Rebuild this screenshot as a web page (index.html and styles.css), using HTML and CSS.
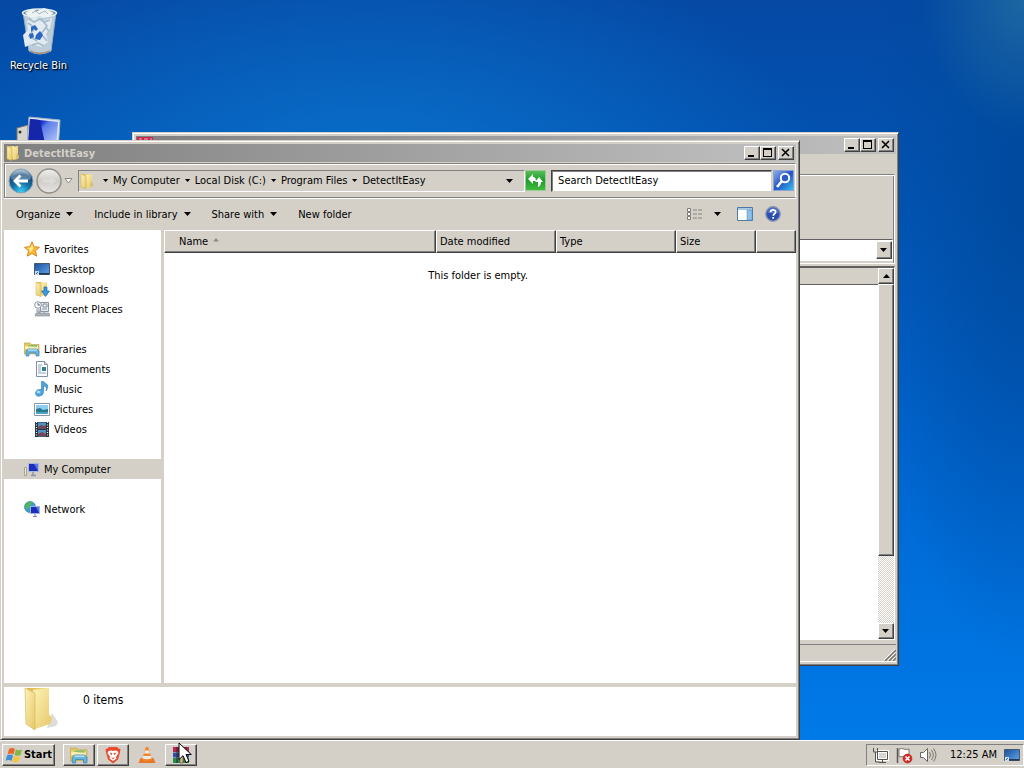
FILE: index.html
```html
<!DOCTYPE html>
<html lang="en">
<head>
<meta charset="utf-8">
<title>DetectItEasy</title>
<link rel="stylesheet" href="styles.css">
</head>
<body>
<svg class="defs" aria-hidden="true">
  <defs>
    <linearGradient id="fold" x1="0" x2="1" y1="0" y2="1"><stop offset="0" stop-color="#fdf3b8"/><stop offset="1" stop-color="#e6c766"/></linearGradient>
    <linearGradient id="foldDark" x1="0" x2="1"><stop offset="0" stop-color="#d9b64c"/><stop offset="1" stop-color="#f3da83"/></linearGradient>
    <linearGradient id="screen" x1="0" x2="1" y1="0" y2="1"><stop offset="0" stop-color="#1430b8"/><stop offset=".3" stop-color="#1c35cc"/><stop offset=".4" stop-color="#5b7be8"/><stop offset="1" stop-color="#c9d8fa"/></linearGradient>
    <linearGradient id="desk" x1="0" x2="1" y1="0" y2="1"><stop offset="0" stop-color="#1b4f9d"/><stop offset="1" stop-color="#5fa6ea"/></linearGradient>
    <radialGradient id="orb" cx=".5" cy=".95" r=".9"><stop offset="0" stop-color="#3fd0f5"/><stop offset=".45" stop-color="#136ea6"/><stop offset=".8" stop-color="#1c4a78"/><stop offset="1" stop-color="#8cb2cc"/></radialGradient>
    <linearGradient id="orbOff" x1="0" x2="0" y1="0" y2="1"><stop offset="0" stop-color="#f0f0ee"/><stop offset=".5" stop-color="#cfcdc9"/><stop offset="1" stop-color="#e8e6e2"/></linearGradient>
    <linearGradient id="green" x1="0" x2="0" y1="0" y2="1"><stop offset="0" stop-color="#58c058"/><stop offset=".5" stop-color="#1f9c2c"/><stop offset="1" stop-color="#43bd3c"/></linearGradient>
    <linearGradient id="blue" x1="0" x2="1" y1="0" y2="1"><stop offset="0" stop-color="#8fb4ec"/><stop offset=".5" stop-color="#2453c4"/><stop offset="1" stop-color="#35c8f4"/></linearGradient>
    <symbol id="i-folder" viewBox="0 0 16 16"><path d="M3 1h6v13H3z" fill="url(#foldDark)"/><path d="M7 2l6-1v13l-5 1z" fill="url(#fold)"/><path d="M2 1l5 2v12.500L2 14z" fill="url(#fold)" stroke="#cfa944" stroke-width=".5"/><path d="M12 8l2 3v2l-3 1z" fill="#d8bd70"/></symbol>
    <symbol id="i-library" viewBox="0 0 16 16"><path d="M0 2h6l1 1.500h8V13H0z" fill="#e6c862" stroke="#b99a42" stroke-width=".6"/><path d="M1 5h13v3H1z" fill="#fbf0b4"/><path d="M1 5h3v-1h9v2" fill="#8cc06c"/><path d="M2 15V10l2-2h9l2 2v5h-3v-3H5v3z" fill="#65b5de" stroke="#3a83b4" stroke-width=".7"/><path d="M4 9h9" stroke="#d5f1fd" stroke-width="1"/></symbol>
    <symbol id="i-desktop" viewBox="0 0 16 16"><path d="M.5 2.500h15v11H.5z" fill="url(#desk)" stroke="#46586e"/><path d="M1 12h14v1.500H1z" fill="#26384e"/><path d="M1 10h4v4H1z" fill="#c9dcf0"/><path d="M2 13l2-2" stroke="#2868b0"/></symbol>
    <symbol id="i-arrow" viewBox="0 0 8 4"><path d="M0 0h7L3.500 4z"/></symbol>
    <symbol id="i-min" viewBox="0 0 12 10"><path d="M2 7h6v2H2z"/></symbol>
    <symbol id="i-max" viewBox="0 0 12 10"><path d="M1 0h9v9H1zM2 2v6h7V2z" fill-rule="evenodd"/></symbol>
    <symbol id="i-close" viewBox="0 0 12 10"><path d="M2 1l7 7M9 1L2 8" stroke="#000" stroke-width="1.600"/></symbol>
  </defs>
</svg>

<main class="desktop">
  <a class="shortcut" href="#recycle">
    <svg class="shortcut-icon" viewBox="5 0 48 48"><path d="M13 5h33l-5 39q-10 6-22 0z" fill="#b0c4d4"/><path d="M13 5l6 39q10 6 22 0l5-39q-15 7-33 0z" fill="#bccdd9" stroke="#91aec7"/><ellipse cx="29.500" cy="6" rx="17" ry="4" fill="#6f8896" stroke="#e5f1f6" stroke-width="1.500"/><path d="M15 6l6-4 6 2 7-3 10 5-6 4-9-1-8 2z" fill="#edf3f5"/><path d="M22 6l4-2 3 3 6-3 3 3" stroke="#a3b4be" fill="none"/><path d="M17 14l8-4 7 4 10-3-2 10-4 6 2 8-7 5-9-3-7 3-2-12 5-5z" fill="#e2ebf1"/><path d="M18 16l7 5-6 8 8 5m4-22l6 7-6 8 6 7M19 12l5 3 6-3 4 3 6-2M35 20l4 4M22 38l6-2 6 3" stroke="#a5bac9" stroke-width="1.600" fill="none"/><path d="M21 20l4-2 3 4-2 2-2-2-3 3zM19 27l4-1 1 4-4 2zM26 28l4-4 3 4-3 5-5-1z" fill="#2c66bf"/><path d="M20 43q9 5 20 0l-1 2q-9 4-18 0z" fill="#a88f78"/></svg>
    <span>Recycle Bin</span>
  </a>
  <a class="shortcut" href="#computer">
    <svg class="shortcut-icon" viewBox="6 0 48 48"><path d="M8 12l11-3v34l-11-3z" fill="#d8d6cc" stroke="#76766e"/><circle cx="11" cy="16" r="1.500" fill="#333"/><path d="M20 1l31 3-2 31-31-2z" fill="#dce5f2" stroke="#a6b4c8"/><path d="M21 3l28 3-2 26-28-2z" fill="#d0d8f5"/><path d="M21 3l28 3-2 26-28-2z" fill="url(#screen)"/><path d="M21 3l10 1 6 28-18-2z" fill="#1526a8"/></svg>
    <span>My Computer</span>
  </a>

  <section class="window window-back" aria-label="Archive window">
    <header class="titlebar">
      <svg class="i16" viewBox="0 0 16 16"><path d="M0 0h16v5H0z" fill="#c3294e"/><path d="M2 2h3m2 0h4m2 0h2" stroke="#eeb0bc"/><path d="M0 5h16v5H0z" fill="#3757b5"/><path d="M0 10h16v5H0z" fill="#389048"/></svg>
      <h2></h2>
      <div class="caption"><button class="btn" aria-label="Minimize"><svg><use href="#i-min"/></svg></button><button class="btn" aria-label="Maximize"><svg><use href="#i-max"/></svg></button><button class="btn close" aria-label="Close"><svg><use href="#i-close"/></svg></button></div>
    </header>
    <div class="back-menu"></div>
    <div class="back-tools"><div class="combo"><button class="btn" aria-label="Open list"><svg class="tri"><use href="#i-arrow"/></svg></button></div></div>
    <div class="back-list">
      <div class="back-pane"><div class="back-head"></div></div>
      <div class="scroll"><button class="btn" aria-label="Scroll up"><svg class="tri up"><use href="#i-arrow"/></svg></button><div class="thumb btn"></div><div class="track"></div><button class="btn" aria-label="Scroll down"><svg class="tri"><use href="#i-arrow"/></svg></button></div>
    </div>
    <footer class="back-status"><svg class="grip" viewBox="0 0 12 12"><path d="M1 12L12 1M5 12l7-7M9 12l3-3" stroke="#77756f" stroke-width="1.500"/><path d="M0 11L11 0M4 11l7-7M8 11l3-3" stroke="#fff"/></svg></footer>
  </section>

  <section class="window window-explorer" aria-label="DetectItEasy">
    <header class="titlebar">
      <svg class="i16"><use href="#i-folder"/></svg>
      <h1>DetectItEasy</h1>
      <div class="caption"><button class="btn" aria-label="Minimize"><svg><use href="#i-min"/></svg></button><button class="btn" aria-label="Maximize"><svg><use href="#i-max"/></svg></button><button class="btn close" aria-label="Close"><svg><use href="#i-close"/></svg></button></div>
    </header>

    <div class="addressbar">
      <div class="travel">
        <button class="plain" aria-label="Back"><svg class="orb" viewBox="0 0 26 26"><circle cx="13" cy="13" r="12" fill="url(#orb)" stroke="#8ba3b5"/><path d="M3 11a10 9 0 0 1 20 0q-10 4-20 0z" fill="#fff" opacity=".28"/><path d="M12.500 7.500L7 13l5.500 5.500M7.500 13H20" fill="none" stroke="#fff" stroke-width="2.800"/></svg></button>
        <button class="plain" aria-label="Forward"><svg class="orb" viewBox="0 0 26 26"><circle cx="13" cy="13" r="12" fill="url(#orbOff)" stroke="#92908c" stroke-width="1.500"/><path d="M20 13l-6-5v3.500H7v3h7V18z" fill="#dddbd7"/></svg></button>
        <button class="plain" aria-label="Recent pages"><svg class="recent" viewBox="0 0 9 6"><path d="M1 .5h7L4.500 5z" fill="#fff" stroke="#8a8883"/></svg></button>
      </div>
      <nav class="crumbs" aria-label="Address">
        <svg class="i16 crumb-icon"><use href="#i-folder"/></svg>
        <svg class="tri-s"><use href="#i-arrow"/></svg><a href="#c1">My Computer</a>
        <svg class="tri-s"><use href="#i-arrow"/></svg><a href="#c2">Local Disk (C:)</a>
        <svg class="tri-s"><use href="#i-arrow"/></svg><a href="#c3">Program Files</a>
        <svg class="tri-s"><use href="#i-arrow"/></svg><a href="#c4">DetectItEasy</a>
        <button class="plain crumb-drop" aria-label="Previous locations"><svg class="tri"><use href="#i-arrow"/></svg></button>
      </nav>
      <button class="plain" aria-label="Refresh"><svg class="go" viewBox="0 0 21 21"><path d="M.5.500h20v20H.5z" fill="url(#green)" stroke="#9ccb9a"/><path d="M3 9l5-5v3q3 0 3 4H8v3zM18 12h-2q0 4-3 5v-5h-3l4-5z" fill="#fff"/></svg></button>
      <input class="search" type="text" aria-label="Search" placeholder="Search DetectItEasy">
      <button class="plain" aria-label="Search"><svg class="go" viewBox="0 0 21 21"><path d="M.5.500h20v20H.5z" fill="url(#blue)" stroke="#8aa6cf"/><circle cx="12" cy="8" r="4.200" fill="#2c5cc8" stroke="#fff" stroke-width="2"/><path d="M9 11l-5 6" stroke="#fff" stroke-width="2.600"/></svg></button>
    </div>

    <div class="commands">
      <button class="plain">Organize<svg class="tri"><use href="#i-arrow"/></svg></button>
      <button class="plain">Include in library<svg class="tri"><use href="#i-arrow"/></svg></button>
      <button class="plain">Share with<svg class="tri"><use href="#i-arrow"/></svg></button>
      <button class="plain">New folder</button>
      <div class="view-tools">
        <button class="plain" aria-label="Change view"><svg class="i16" viewBox="0 0 16 16"><path d="M1.500 2.500h3v3h-3zM1.500 6.500h3v3h-3zM1.500 10.500h3v3h-3z" fill="#fff" stroke="#7d7b78"/><path d="M7 4h4m1 0h4M7 8h4m1 0h4M7 12h4m1 0h4" stroke="#85837f"/></svg></button>
        <button class="plain" aria-label="More views"><svg class="tri"><use href="#i-arrow"/></svg></button>
        <button class="plain" aria-label="Preview pane"><svg class="i16" viewBox="0 0 16 16"><path d="M.5 1.500h15v13H.5z" fill="#fff" stroke="#4c79a5"/><path d="M1 2h14v2H1z" fill="#a9c7e2"/><path d="M10 4h5v10h-5z" fill="#8ac1e8" stroke="#5c94c2" stroke-width=".6"/></svg></button>
        <button class="plain" aria-label="Help"><svg class="i16" viewBox="0 0 16 16"><circle cx="8" cy="8" r="7.200" fill="#2b4fb0" stroke="#8693b6" stroke-width="1.400"/><path d="M2.500 7a5.500 5 0 0 1 11 0" fill="#5374c6"/><path d="M5.500 6.300q0-2.500 2.600-2.500 2.500 0 2.500 2.200 0 1.300-1.300 2-1 .7-1 1.700M8.200 11v1.700" fill="none" stroke="#fff" stroke-width="1.700"/></svg></button>
      </div>
    </div>

    <div class="body">
      <nav class="tree" aria-label="Folders">
        <ul>
          <li><a href="#fav"><svg class="i16" viewBox="0 0 16 16"><path d="M8 .8l2.200 4.900 5.300.6-4 3.500 1.200 5.400L8 12.500l-4.700 2.700 1.200-5.400-4-3.500 5.300-.6z" fill="#f8b934" stroke="#d98b28"/><path d="M8 3l1.400 3.600L8 10l-3 1.500.8-3L3 7l3.400-.6z" fill="#fde890"/></svg>Favorites</a></li>
          <li class="sub"><a href="#desktop"><svg class="i16"><use href="#i-desktop"/></svg>Desktop</a></li>
          <li class="sub"><a href="#downloads"><svg class="i16" viewBox="0 0 16 16"><use href="#i-folder" width="16" height="16"/><path d="M10 6h3v4h2.500l-4 5.500-4-5.500H10z" fill="#3b9be0" stroke="#1b67ab" stroke-width=".7"/></svg>Downloads</a></li>
          <li class="sub"><a href="#recent"><svg class="i16" viewBox="0 0 16 16"><path d="M6.500 1.500h8v9h-8z" fill="#e9edf1" stroke="#8a94a0"/><path d="M9 3h4v3H9zM8 8h5M3 8v3h4m-2-3v6m5-4v3" stroke="#8793a1" fill="none"/><circle cx="4" cy="4" r="3.300" fill="#fff" stroke="#8995a3"/><path d="M4 2v2h2" stroke="#566373" fill="none"/><path d="M2 12h13l1 3H1z" fill="#aab2bb" stroke="#7f8892" stroke-width=".6"/></svg>Recent Places</a></li>
        </ul>
        <ul>
          <li><a href="#lib"><svg class="i16"><use href="#i-library"/></svg>Libraries</a></li>
          <li class="sub"><a href="#docs"><svg class="i16" viewBox="0 0 16 16"><path d="M2.500.5h8l3 3v12h-11z" fill="#fff" stroke="#8390a3"/><path d="M10.500.5v3h3" fill="#d0dbe8" stroke="#8390a3"/><path d="M4 4h4M4 6h3M4 8h3M4 10h3M4 12h8" stroke="#8aa2bd"/><path d="M8 6h4v4H8z" fill="#387d93"/></svg>Documents</a></li>
          <li class="sub"><a href="#music"><svg class="i16" viewBox="0 0 16 16"><path d="M7.500.5v8Q2 8 1.500 12q.5 4 4.500 3 3.500-1 3.500-4V5q4 0 2.500 5 4-6-1-8L9.500.5z" fill="#4ea6de" stroke="#2372ac" stroke-width=".6"/><ellipse cx="4.500" cy="11" rx="2" ry="1.200" fill="#a8dcf8"/></svg>Music</a></li>
          <li class="sub"><a href="#pics"><svg class="i16" viewBox="0 0 16 16"><path d="M.5 2.500h15v12H.5z" fill="#fff" stroke="#8796a6"/><path d="M2 4h12v9H2z" fill="#8bcef0"/><path d="M2 8l4-1 3 2 5-1v5H2z" fill="#2b788b"/><path d="M2 11h12v2H2z" fill="#4fa3c6"/></svg>Pictures</a></li>
          <li class="sub"><a href="#videos"><svg class="i16" viewBox="0 0 16 16"><path d="M1 1h14v15H1z" fill="#28333e"/><path d="M4 1.500h8v6H4zM4 9h8v6.500H4z" fill="#4c92c5"/><path d="M4 6l3-2 3 1 2-1v3.500H4zM4 13l4-2 4 2v2H4z" fill="#7c4250"/><path d="M2.500 1v15M13.500 1v15" stroke="#eee" stroke-width="1.200" stroke-dasharray="1 1.500"/></svg>Videos</a></li>
        </ul>
        <ul>
          <li class="selected"><a href="#pc"><svg class="i16" viewBox="0 0 16 16"><path d="M.5 6.500h2v8h-2z" fill="#eeeccc" stroke="#8b8b7c" stroke-width=".7"/><path d="M4 2h11v9H4z" fill="#a9b6dc"/><path d="M5 3h9v7H5z" fill="#1b2dbb"/><path d="M10 3h4v7z" fill="#5a78e4"/><path d="M9 11v3m-2 .5h5" stroke="#8b92a6" stroke-width="1.400"/></svg>My Computer</a></li>
        </ul>
        <ul>
          <li><a href="#net"><svg class="i16" viewBox="0 0 16 16"><circle cx="6" cy="6" r="5.500" fill="#3b9fd0" stroke="#256f98" stroke-width=".6"/><path d="M2 3q4-4 6-1L6 5 4 8 1 7zM5 9l3-1v3z" fill="#51b858"/><path d="M6 5h10v8H6z" fill="#9fb2e2"/><path d="M7 6h8v6H7z" fill="#1b2dbb"/><path d="M12 6h3v6z" fill="#5a78e4"/><path d="M11 13v2m-2 .5h4" stroke="#7c86a0"/></svg>Network</a></li>
        </ul>
      </nav>
      <div class="files">
        <table>
          <colgroup><col><col class="c-wide"><col class="c-wide"><col class="c-size"><col class="c-rest"></colgroup>
          <thead><tr><th class="name">Name<svg class="sort" viewBox="0 0 6 4"><path d="M3 0l3 3.500H0z" fill="#8d8b86"/></svg></th><th>Date modified</th><th>Type</th><th>Size</th><th></th></tr></thead>
        </table>
        <p class="empty">This folder is empty.</p>
      </div>
    </div>

    <footer class="details">
      <svg class="big-folder" viewBox="0 0 40 44"><path d="M26 41l9-2 2-4-6-9z" fill="#dddcda"/><path d="M6 1h20v35H6z" fill="url(#foldDark)"/><path d="M12 3l16-2v26l3 4-2 6-15 5z" fill="url(#fold)"/><path d="M4 1l10 5v37L5 37z" fill="url(#fold)" stroke="#d9b95c" stroke-width=".7"/></svg>
      <span>0 items</span>
    </footer>
  </section>
</main>

<footer class="taskbar">
  <button class="btn start"><svg class="flag" viewBox="0 0 18 16"><path d="M4 2q3-2 6 0L8.500 7.500q-3-2-6 0z" fill="#e8652d"/><path d="M11 2.500q3 1.500 6 0L15.500 8q-3 1.500-6 0z" fill="#7fb843"/><path d="M2 8.500q3-2 6 0L6.500 14q-3-2-6 0z" fill="#3f8fd8"/><path d="M9 9q3 1.500 6 0l-1.500 5.500q-3 1.500-6 0z" fill="#f5c53a"/></svg>Start</button>
  <div class="tasks">
    <button class="btn task" aria-label="Windows Explorer"><svg class="i18"><use href="#i-library"/></svg></button>
    <button class="btn task" aria-label="Brave"><svg class="i18" viewBox="0 0 18 18"><path d="M5 1h8l1.500 1.500 2 .5-.5 3.500-2 7L9 17.500 4 13.500l-2-7L1.500 3l2-.5z" fill="#e9492c"/><path d="M4.500 5L7 4.500 9 5l2-.5 2.500.5 1 2-2.500 4 .5 1.500L9 15l-3.500-2.500L6 11 3.500 7z" fill="#fff"/><path d="M5.500 6.500l3 .8-1 2zM12.500 6.500l-3 .8 1 2zM7 11l2 1 2-1-2 2.500z" fill="#e9492c"/></svg></button>
    <button class="btn task flat" aria-label="VLC media player"><svg class="i18" viewBox="0 0 18 18"><path d="M2.500 12h13l2 5H.5z" fill="#e8772a"/><path d="M7.800 1h2.400L14 14q-5 2.500-10 0z" fill="#f0852c"/><path d="M7 4.500h4l.9 3H6.100zM5.300 10h7.400l.8 2.500q-4.500 1.500-9 0z" fill="#ececec"/></svg></button>
    <button class="btn task" aria-label="WinRAR"><svg class="i18" viewBox="0 0 18 18"><path d="M1 1h16v5H1z" fill="#b3274e"/><path d="M1 6.500h16v5H1z" fill="#3450a6"/><path d="M1 12h16v5H1z" fill="#2c8a4a"/><path d="M5 1v16M14 1v16" stroke="#242034"/><path d="M8 1h3v16H8z" fill="#d3b78b" stroke="#57432f" stroke-width=".6"/></svg></button>
  </div>
  <div class="tray">
    <svg class="i18" viewBox="0 0 18 18"><path d="M6.500 5.500h10v8h-10z" fill="#d7d5d0" stroke="#fff" stroke-width="3"/><path d="M6.500 5.500h10v8h-10zM8 16.500h7M11.500 14v2M2.500 2v4h4V2M4.500 6v10h4" fill="none" stroke="#55534f"/></svg>
    <svg class="i18" viewBox="0 0 18 18"><path d="M2.500 2v15" stroke="#5c5a56" stroke-width="1.500"/><path d="M4 3q3-1 5 0t5 0v8q-3 1-5 0t-5 0z" fill="#fff" stroke="#77756f"/><circle cx="12.500" cy="12.500" r="4.500" fill="#d42b22" stroke="#a51a14" stroke-width=".5"/><path d="M10.500 10.500l4 4m0-4l-4 4" stroke="#fff" stroke-width="1.600"/></svg>
    <svg class="i18" viewBox="0 0 18 18"><path d="M1.500 6.500h3l4-4v13l-4-4h-3z" fill="#fff" stroke="#67655f"/><path d="M10.500 6q2 3 0 6M12.500 4q3.500 5 0 10M14.500 2.500q5 6.500 0 13" fill="none" stroke="#77756f"/></svg>
    <time>12:25 AM</time>
    <svg class="i16"><use href="#i-desktop"/></svg>
  </div>
</footer>
<svg class="cursor" viewBox="0 0 14 22"><path d="M1 1v16.500l4-3.800 3 6.800 3-1.300-3-6.700h5.300z" fill="#fff" stroke="#000"/></svg>
</body>
</html>
```
FILE: styles.css
```css
* { box-sizing: border-box; }
body {
  margin: 0;
  height: 100vh;
  display: flex;
  flex-direction: column;
  overflow: hidden;
  font: 11px/15px "DejaVu Sans Condensed", "Noto Sans", sans-serif;
  color: #000;
}
svg { display: block; flex: none; }
a { color: inherit; text-decoration: none; }
h1, h2, p, ul { margin: 0; padding: 0; }
ul { list-style: none; }
button { font: inherit; color: inherit; padding: 0; }
.defs { position: absolute; width: 0; height: 0; }
.i16 { width: 16px; height: 16px; }
.i18 { width: 18px; height: 18px; }
.tri { width: 8px; height: 4px; }
.tri-s { width: 6px; height: 3px; }
.up { transform: rotate(180deg); }
.plain { border: 0; background: none; display: flex; align-items: center; }
.btn {
  display: flex;
  align-items: center;
  justify-content: center;
  background: #d4d0c8;
  border: 1px solid;
  border-color: #fff #404040 #404040 #fff;
  box-shadow: inset -1px -1px #808080;
}

.desktop {
  position: relative;
  flex: 1;
  background:
    radial-gradient(ellipse 10% 18% at 100% 0, #1d66a2, transparent),
    radial-gradient(ellipse 16% 65% at 100% 25%, #004a9e, transparent),
    radial-gradient(ellipse 45% 36% at 36% 26%, #0a72cc, transparent),
    linear-gradient(180deg, #0549a4 0%, #0254b4 25%, #0066d0 60%, #007ae8 100%);
}
.shortcut {
  display: flex;
  flex-direction: column;
  align-items: center;
  width: 77px;
  height: 109px;
  padding-top: 7px;
  gap: 3px;
  color: #fff;
  text-shadow: 1px 1px 1px #000, 1px 1px 2px #001a40;
}
.shortcut-icon { width: 48px; height: 48px; }

.window {
  position: absolute;
  display: flex;
  flex-direction: column;
  background: #d4d0c8;
  border: 1px solid;
  border-color: #d4d0c8 #404040 #404040 #d4d0c8;
  box-shadow: inset 1px 1px #fff, inset -1px -1px #808080;
  padding: 3px;
}
.window-back { left: 132px; right: 125px; top: 132px; bottom: 74px; padding-right: 2px; }
.window-explorer { left: 0; right: 224px; top: 140px; bottom: 0; }
.titlebar {
  display: flex;
  align-items: center;
  gap: 3px;
  height: 18px;
  flex: none;
  padding: 0 2px 0 1px;
  background: linear-gradient(90deg, #808080, #c0c0c0);
}
.titlebar h1, .titlebar h2 { flex: 1; font-size: 11px; line-height: 15px; color: #d4d0c8; }
.caption { display: flex; }
.caption .btn { width: 16px; height: 14px; }
.caption .close { margin-left: 2px; }
.caption svg { width: 12px; height: 10px; }

.back-menu { height: 20px; }
.back-tools {
  height: 90px;
  margin-right: 1px;
  border: 1px solid #808080;
  border-color: #808080 #fff #fff #808080;
  box-shadow: inset 0 1px #fff, inset -1px 0 #808080;
  padding: 0 1px 2px;
  display: flex;
  align-items: flex-end;
}
.combo {
  flex: 1;
  display: flex;
  justify-content: flex-end;
  height: 22px;
  padding: 1px 0;
  background: #fff;
  border: 1px solid;
  border-color: #606060 #fff #fff #606060;
}
.combo .btn { width: 16px; }
.back-list {
  flex: 1;
  display: flex;
  margin: 2px 1px 0 0;
  min-height: 0;
  background: #fff;
  border: 1px solid;
  border-color: #606060 #fff #fff #606060;
  border-top-width: 2px;
}
.back-pane { flex: 1; }
.back-head { height: 17px; background: #d4d0c8; border-bottom: 1px solid #606060; }
.scroll { width: 16px; display: flex; flex-direction: column; }
.scroll .btn { height: 16px; flex: none; }
.scroll .thumb { height: auto; flex: 80; }
.track { flex: 20; background: repeating-conic-gradient(#d4d0c8 0 25%, #fff 0 50%) 0 0 / 2px 2px; }
.back-status {
  display: flex;
  justify-content: flex-end;
  align-items: flex-end;
  height: 18px;
  margin-top: 4px;
  border-top: 1px solid #808080;
  border-bottom: 1px solid #fff;
}
.grip { width: 12px; height: 12px; }

.addressbar {
  display: flex;
  align-items: center;
  height: 35px;
  flex: none;
  padding-right: 1px;
  margin-top: 1px;
  border: 1px solid #808080;
  border-right-color: #fff;
  box-shadow: inset 1px 1px #fff, 0 1px #fff;
}
.travel { display: flex; align-items: center; width: 73px; padding-left: 3px; gap: 2px; }
.orb { width: 26px; height: 26px; }
.recent { width: 9px; height: 6px; }
.crumbs {
  flex: 2;
  display: flex;
  align-items: center;
  height: 22px;
  min-width: 0;
  white-space: nowrap;
  border: 1px solid;
  border-color: #808080 #fff #fff #808080;
}
.crumbs .tri-s { margin: 0 4px 0 5px; }
.crumbs .crumb-icon { margin-right: 3px; }
.crumb-drop { margin-left: auto; padding: 8px 10px; }
.addressbar .go { width: 21px; height: 21px; }
.search {
  width: 28%;
  height: 22px;
  margin: 0 1px 0 5px;
  padding: 0 6px;
  border: 1px solid;
  border-color: #404040 #d4d0c8 #d4d0c8 #404040;
  box-shadow: inset 1px 1px #808080;
  background: #fff;
  font: inherit;
}
.search::placeholder { color: #000; opacity: 1; }

.commands { display: flex; align-items: center; gap: 20px; height: 32px; flex: none; padding: 0 15px 0 12px; }
.commands button { gap: 6px; white-space: nowrap; }
.view-tools { display: flex; align-items: center; margin-left: auto; gap: 12px; }
.view-tools button:nth-child(3) { margin-left: 3px; }

.body { flex: 1; display: flex; min-height: 0; }
.tree {
  width: 160px;
  flex: none;
  display: flex;
  flex-direction: column;
  gap: 20px;
  padding-top: 9px;
  background: #fff;
  border-right: 3px solid #d4d0c8;
}
.tree a { display: flex; align-items: center; gap: 4px; height: 20px; padding-left: 20px; }
.tree .sub a { padding-left: 30px; }
.selected { background: #d4d0c8; }
.files { flex: 1; background: #fff; }
table { width: 100%; table-layout: fixed; border-collapse: separate; border-spacing: 0; }
.c-wide { width: 120px; }
.c-size { width: 80px; }
.c-rest { width: 40px; }
th {
  height: 23px;
  padding: 0 3px;
  font-weight: normal;
  text-align: left;
  background: #d4d0c8;
  border: 1px solid;
  border-color: #fff #404040 #404040 #fff;
  box-shadow: inset -1px -1px #808080;
}
th.name { padding-left: 14px; }
.sort { display: inline-block; width: 6px; height: 4px; margin: 0 0 3px 5px; }
.empty { padding: 15px 4px 0 0; text-align: center; }
.details {
  display: flex;
  gap: 22px;
  height: 53px;
  flex: none;
  padding: 0 17px;
  background: #fff;
  border-top: 4px solid #d4d0c8;
  font-size: 12px;
  line-height: 16px;
}
.details span { padding-top: 5px; }
.big-folder { width: 40px; height: 44px; }

.taskbar {
  display: flex;
  align-items: center;
  height: 28px;
  flex: none;
  padding: 0 0 0 2px;
  background: #d4d0c8;
  border-top: 1px solid #fff;
}
.start { height: 22px; width: 53px; gap: 1px; font-weight: bold; }
.flag { width: 18px; height: 16px; }
.tasks { display: flex; gap: 2px; margin-left: 8px; }
.task { width: 32px; height: 22px; }
.flat { background: none; border-color: transparent; box-shadow: none; }
.tray {
  display: flex;
  align-items: center;
  gap: 6px;
  height: 22px;
  margin-left: auto;
  padding: 0 3px 0 4px;
  border: 1px solid;
  border-color: #808080 #fff #fff #808080;
}
.tray time { padding: 0 1px 0 7px; }
.cursor { position: absolute; left: 178px; bottom: 4px; width: 14px; height: 22px; }
```
